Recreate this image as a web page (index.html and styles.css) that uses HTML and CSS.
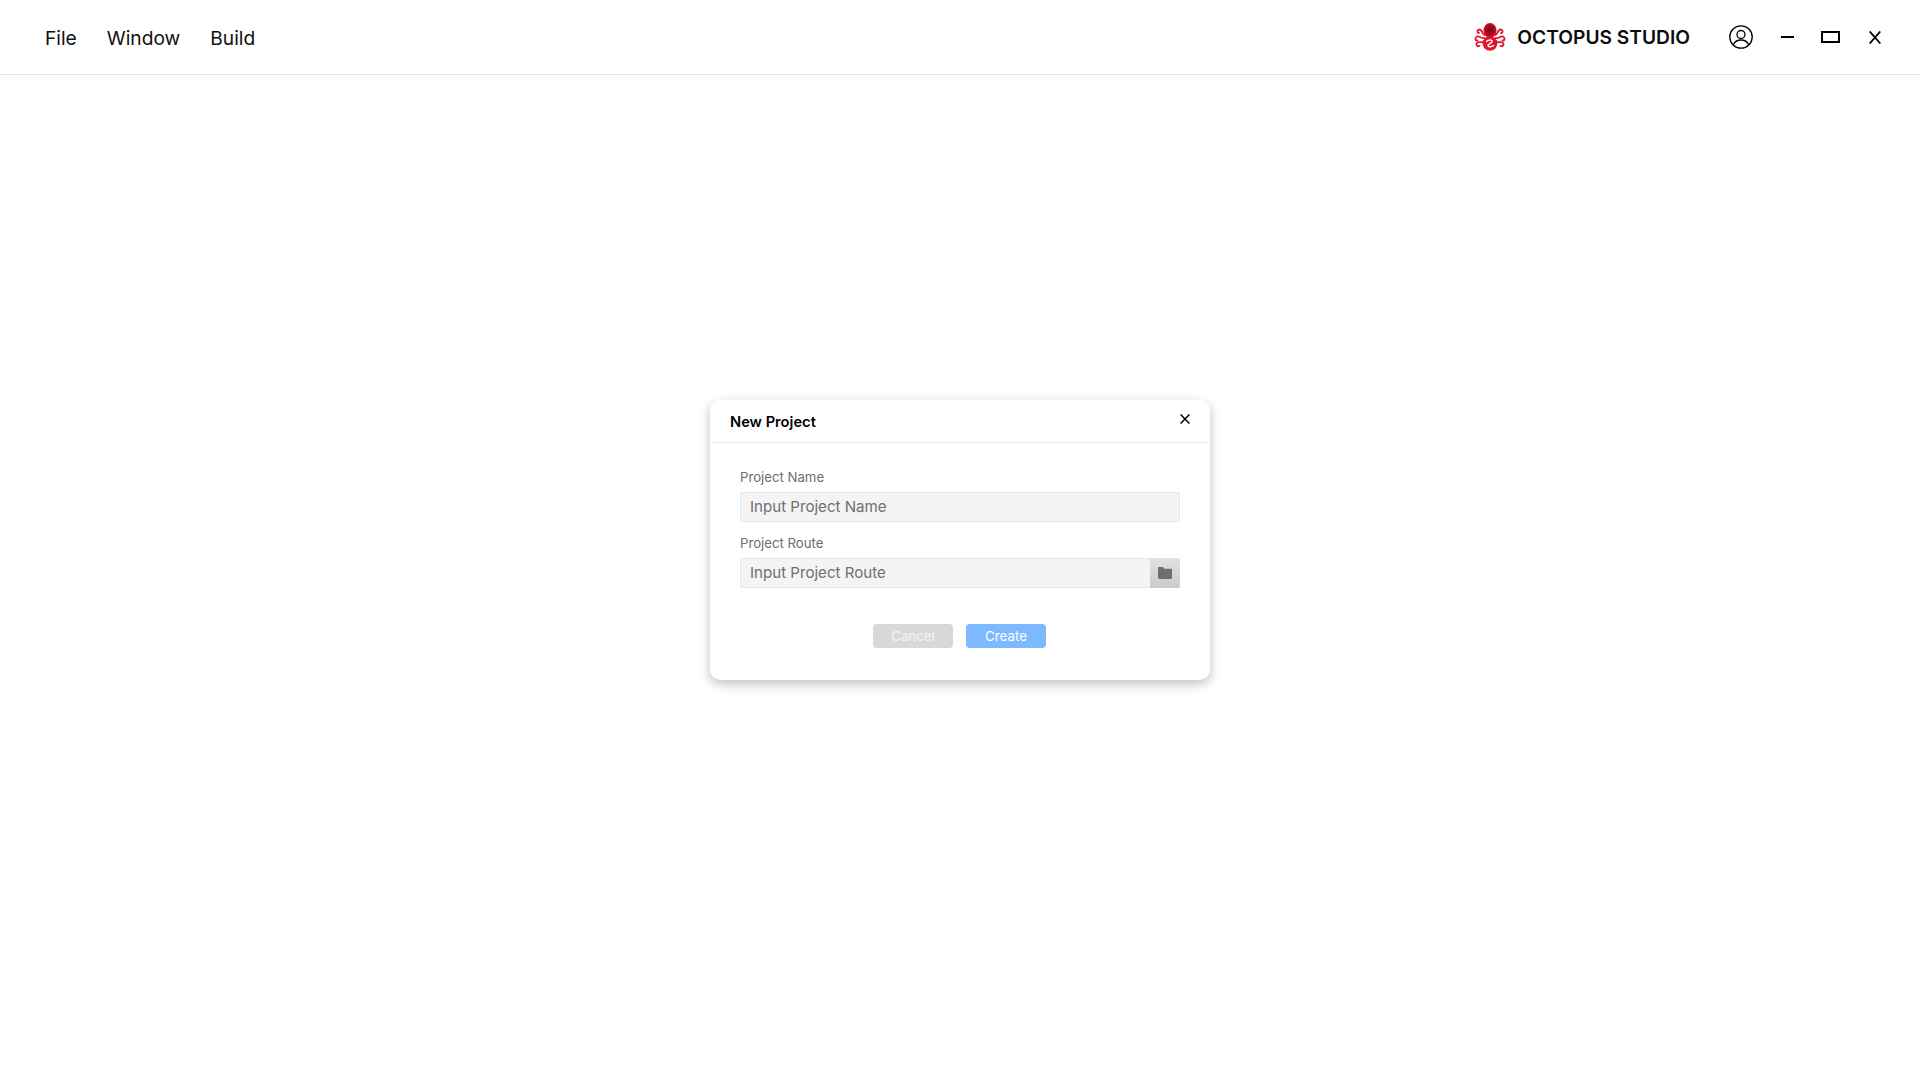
FILE: index.html
```html
<!DOCTYPE html>
<html lang="en">
<head>
<meta charset="utf-8">
<title>Octopus Studio</title>
<link rel="stylesheet" href="styles.css">
</head>
<body>
<header class="topbar">
  <nav class="menu">
    <span class="menu-item">File</span>
    <span class="menu-item">Window</span>
    <span class="menu-item">Build</span>
  </nav>
  <div class="top-right">
    <div class="brand">
      <svg class="logo" width="32" height="28" viewBox="0 0 32 28">
        <defs>
          <radialGradient id="hd" cx="0.5" cy="0.45" r="0.6"><stop offset="0" stop-color="#6e0817"/><stop offset="1" stop-color="#dc1029"/></radialGradient>
        </defs>
        <ellipse cx="16" cy="7.500" rx="6.500" ry="7.500" fill="url(#hd)"/>
        <g fill="none" stroke="#e3122d" stroke-width="1.800" stroke-linecap="round">
          <path d="M11 12C8.500 12.500 8.500 6.500 5.500 6.500C3 6.500 2.500 10 5 10"/>
          <path d="M21 12C23.500 12.500 23.500 6.500 26.500 6.500C29 6.500 29.500 10 27 10"/>
          <path d="M10.500 15C7.500 16 5.500 12.500 3 13.500C.8 14.500 1 18 3.500 17.500"/>
          <path d="M21.500 15C24.500 16 26.500 12.500 29 13.500C31.200 14.500 31 18 28.500 17.500"/>
          <path d="M10 18C7.500 21 5.500 18 3.500 19.500C1.500 21 2.500 24 5.500 23"/>
          <path d="M22 18C24.500 21 26.500 18 28.500 19.500C30.500 21 29.500 24 26.500 23"/>
        </g>
        <circle cx="16" cy="20.500" r="7.300" fill="#e3122d"/>
        <path d="M12.500 18.500C14.500 16.500 19 16.500 18 19L14 22C13.500 24 17 24.500 19.500 22.500" fill="none" stroke="#fff" stroke-width="1.400" stroke-linecap="round"/>
      </svg>
      <span class="brand-name">OCTOPUS STUDIO</span>
    </div>
    <div class="win-icons">
      <svg class="win-user" width="24" height="24" viewBox="0 0 24 24" fill="none" stroke="#000" stroke-width="1.300">
        <circle cx="12" cy="12" r="11.200"/>
        <circle cx="12" cy="9.500" r="4"/>
        <path d="M4.200 20C5.800 16.200 8.700 15 12 15S18.200 16.200 19.800 20"/>
      </svg>
      <svg class="win-min" width="13" height="2" viewBox="0 0 13 2"><rect width="13" height="2" fill="#000"/></svg>
      <svg class="win-max" width="19" height="12" viewBox="0 0 19 12" fill="none" stroke="#000" stroke-width="2"><rect x="1" y="1" width="17" height="10"/></svg>
      <svg class="win-close" width="12" height="13" viewBox="0 0 12 13" fill="none" stroke="#000" stroke-width="1.800"><path d="M.7.500L11.300 12.500M11.300.500L.7 12.500"/></svg>
    </div>
  </div>
</header>

<main class="stage">
  <section class="dialog">
    <div class="dialog-head">
      <span class="dialog-title">New Project</span>
      <svg class="dialog-close" width="10" height="10" viewBox="0 0 10 10" fill="none" stroke="#000" stroke-width="1.500"><path d="M.6.500L9.400 9.500M9.400.500L.6 9.500"/></svg>
    </div>
    <div class="dialog-body">
      <label class="field-label">Project Name</label>
      <div class="field"><span class="placeholder">Input Project Name</span></div>
      <label class="field-label field-label-second">Project Route</label>
      <div class="field">
        <span class="placeholder">Input Project Route</span>
        <span class="browse">
          <svg width="14" height="12" viewBox="0 0 14 12"><path d="M0 1.200C0 .5.500 0 1.200 0H5L6.500 1.800H12.800C13.500 1.800 14 2.300 14 3V10.800C14 11.500 13.500 12 12.800 12H1.200C.5 12 0 11.500 0 10.800Z" fill="#6f6f6f"/></svg>
        </span>
      </div>
      <div class="actions">
        <span class="btn btn-cancel">Cancel</span>
        <span class="btn btn-create">Create</span>
      </div>
    </div>
  </section>
</main>
</body>
</html>
```
FILE: styles.css
```css
* { box-sizing: border-box; }
html, body { margin: 0; height: 100%; }
body {
  width: 1920px;
  height: 1080px;
  background: #fff;
  font-family: Inter, "Noto Sans", sans-serif;
  display: flex;
  flex-direction: column;
  overflow: hidden;
}
.topbar {
  height: 75px;
  flex: none;
  border-bottom: 1px solid #e4e4e4;
  display: flex;
  align-items: center;
  justify-content: space-between;
  padding: 0 39px 0 45px;
}
.menu { display: flex; gap: 30px; padding-top: 2px; }
.menu-item { font-size: 19.2px; color: #111; line-height: 24px; }
.top-right { display: flex; align-items: center; }
.brand { display: flex; align-items: center; gap: 11px; }
.logo { display: block; }
.brand-name { font-size: 19.2px; font-weight: 600; color: #0c0c0c; line-height: 24px; }
.win-icons { display: flex; align-items: center; margin-left: 39px; }
.win-user { display: block; }
.win-min { display: block; margin-left: 28px; }
.win-max { display: block; margin-left: 27px; }
.win-close { display: block; margin-left: 29px; }
.stage {
  flex: 1;
  display: flex;
  justify-content: center;
  align-items: flex-start;
  padding-top: 325px;
}
.dialog {
  width: 500px;
  height: 280px;
  background: #fff;
  border-radius: 10px;
  box-shadow: 0 4px 12px rgba(0, 0, 0, .25);
}
.dialog-head {
  height: 43px;
  border-bottom: 1px solid #e8e8e8;
  display: flex;
  align-items: center;
  justify-content: space-between;
  padding: 0 20px;
}
.dialog-title { font-size: 14.7px; font-weight: 600; color: #000; margin-top: 1px; }
.dialog-close { display: block; margin-top: -4px; }
.dialog-body { padding: 26px 30px 0; }
.field-label {
  display: block;
  font-size: 13.2px;
  line-height: 17px;
  color: #6e6e6e;
  margin-bottom: 6px;
}
.field-label-second { margin-top: 13px; }
.field {
  height: 30px;
  background: #f4f4f4;
  border: 1px solid #e6e6e6;
  border-radius: 2px;
  display: flex;
  align-items: center;
  justify-content: space-between;
  padding-left: 9px;
}
.placeholder { font-size: 15.1px; color: #6f6f6f; margin-top: -1px; }
.browse {
  width: 30px;
  height: 30px;
  margin: -1px -1px -1px 0;
  background: linear-gradient(#e2e2e2, #cacaca);
  border-radius: 0 2px 2px 0;
  display: flex;
  align-items: center;
  justify-content: center;
}
.actions {
  display: flex;
  justify-content: center;
  gap: 13px;
  margin-top: 36px;
  padding-right: 1px;
}
.btn {
  width: 80px;
  height: 24px;
  border-radius: 4px;
  font-size: 13.3px;
  line-height: 24px;
  color: #fff;
  text-align: center;
}
.btn-cancel { background: #d8d8d8; color: #f4f4f4; }
.btn-create { background: #7cb9ff; }
```
